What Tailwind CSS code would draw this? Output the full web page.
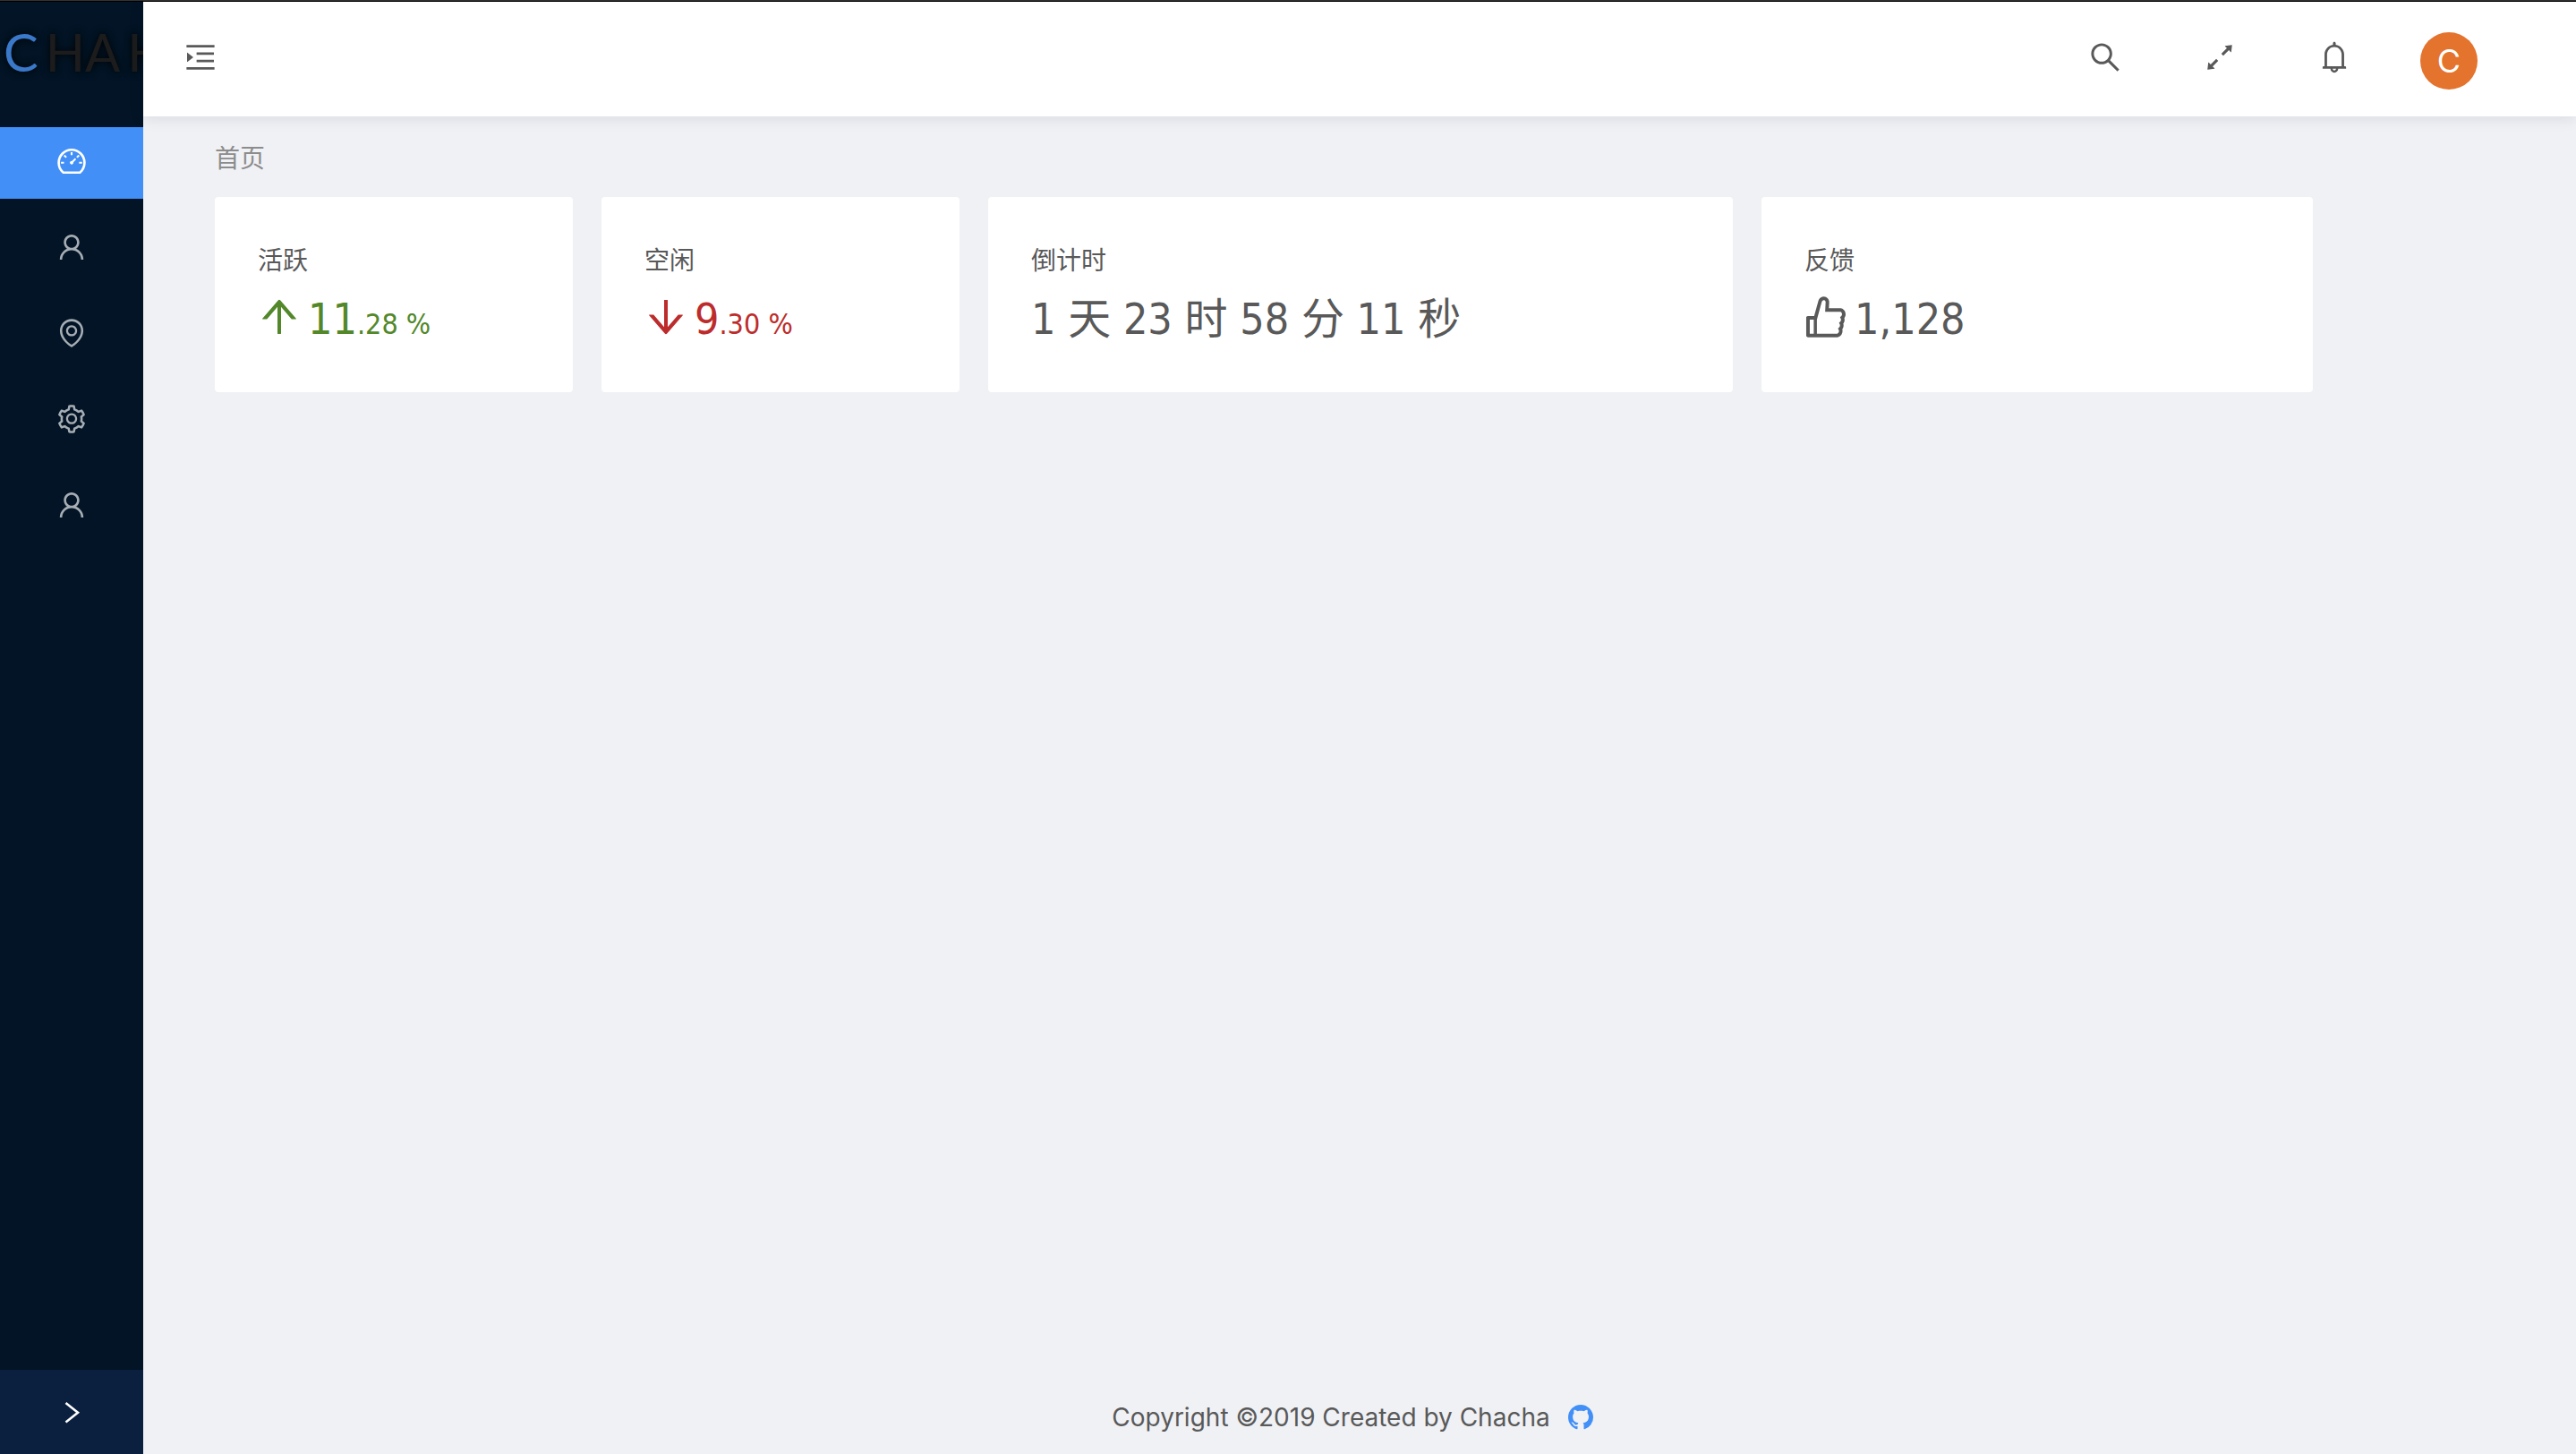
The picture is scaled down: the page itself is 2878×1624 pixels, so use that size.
<!DOCTYPE html>
<html lang="zh-CN">
<head>
<meta charset="utf-8">
<meta name="viewport" content="width=device-width, initial-scale=1">
<title>首页</title>
<script src="https://cdn.jsdelivr.net/npm/@tailwindcss/browser@4"></script>
</head>
<body class="flex min-h-screen flex-col bg-[#f0f1f5] font-['Inter','Noto_Sans_CJK_SC',sans-serif] text-[28px] text-[#595959]">
<div class="h-0.5 border-t border-[#333333] bg-black"></div>
<div class="flex flex-1">
  <aside class="flex w-40 shrink-0 flex-col bg-[#021425]">
    <div class="flex h-[140px] items-start gap-2 overflow-hidden pt-5 pl-1 font-['Lato',sans-serif] text-[58px] leading-[72px] whitespace-nowrap text-[#1c1c1c] [text-shadow:0_0_10px_#000]">
      <span class="text-[#3a78c9]">C</span><span>HA</span><span>H</span>
    </div>
    <nav class="flex flex-1 flex-col gap-4 text-[#a6adb4]">
      <a href="#" aria-label="首页" class="flex h-20 items-center justify-center bg-[#4290f7] pb-1 text-white"><svg class="size-9" viewBox="0 0 1024 1024" fill="currentColor"><path d="M924.8 385.6a446.7 446.7 0 0 0-96-142.4 446.7 446.7 0 0 0-142.4-96C631.1 123.8 572.5 112 512 112s-119.1 11.8-174.4 35.2a446.7 446.7 0 0 0-142.4 96 446.7 446.7 0 0 0-96 142.4C75.8 440.9 64 499.5 64 560c0 132.7 58.3 257.7 159.9 343.1l1.7 1.4c5.8 4.8 13.1 7.5 20.6 7.5h531.7c7.5 0 14.8-2.7 20.6-7.5l1.7-1.4C901.7 817.7 960 692.7 960 560c0-60.5-11.9-119.1-35.2-174.4zM761.4 836H262.6A371.12 371.12 0 0 1 140 560c0-99.4 38.7-192.8 109-263 70.3-70.3 163.7-109 263-109 99.4 0 192.8 38.7 263 109 70.3 70.3 109 163.7 109 263 0 105.6-44.5 205.5-122.6 276zM623.5 421.5a8.03 8.03 0 0 0-11.3 0L527.7 506c-18.7-5-39.4-.2-54.1 14.5a55.95 55.95 0 0 0 0 79.2 55.95 55.95 0 0 0 79.2 0 55.87 55.87 0 0 0 14.5-54.1l84.5-84.5c3.1-3.1 3.1-8.2 0-11.3l-28.3-28.3zM490 320h44c4.4 0 8-3.6 8-8v-80c0-4.4-3.6-8-8-8h-44c-4.4 0-8 3.6-8 8v80c0 4.4 3.6 8 8 8zm260 218v44c0 4.4 3.6 8 8 8h80c4.4 0 8-3.6 8-8v-44c0-4.4-3.6-8-8-8h-80c-4.4 0-8 3.6-8 8zm12.7-197.2l-31.1-31.1a8.03 8.03 0 0 0-11.3 0l-56.6 56.6a8.03 8.03 0 0 0 0 11.3l31.1 31.1c3.1 3.1 8.2 3.1 11.3 0l56.6-56.6c3.1-3.1 3.1-8.2 0-11.3zm-458.6-31.1a8.03 8.03 0 0 0-11.3 0l-31.1 31.1a8.03 8.03 0 0 0 0 11.3l56.6 56.6c3.1 3.1 8.2 3.1 11.3 0l31.1-31.1c3.1-3.1 3.1-8.2 0-11.3l-56.6-56.6zM262 530h-80c-4.4 0-8 3.6-8 8v44c0 4.4 3.6 8 8 8h80c4.4 0 8-3.6 8-8v-44c0-4.4-3.6-8-8-8z"/></svg></a>
      <a href="#" aria-label="用户" class="flex h-20 items-center justify-center pb-1"><svg class="size-9" viewBox="0 0 1024 1024" fill="currentColor"><path d="M858.5 763.6a374 374 0 0 0-80.6-119.5 375.63 375.63 0 0 0-119.5-80.6c-.4-.2-.8-.3-1.2-.5C719.5 518 760 444.7 760 362c0-137-111-248-248-248S264 225 264 362c0 82.7 40.5 156 102.8 201.1-.4.2-.8.3-1.2.5-44.8 18.9-85 46-119.5 80.6a375.63 375.63 0 0 0-80.6 119.5A371.7 371.7 0 0 0 136 901.8a8 8 0 0 0 8 8.2h60c4.4 0 7.9-3.5 8-7.8 2-77.2 33-149.5 87.8-204.3 56.7-56.7 132-87.9 212.2-87.9s155.5 31.2 212.2 87.9C779 752.7 810 825 812 902.2c.1 4.4 3.6 7.8 8 7.8h60a8 8 0 0 0 8-8.2c-1-47.8-10.9-94.3-29.5-138.2zM512 534c-45.9 0-89.1-17.9-121.6-50.4S340 407.9 340 362c0-45.9 17.9-89.1 50.4-121.6S466.1 190 512 190s89.1 17.9 121.6 50.4S684 316.1 684 362c0 45.9-17.9 89.1-50.4 121.6S557.9 534 512 534z"/></svg></a>
      <a href="#" aria-label="位置" class="flex h-20 items-center justify-center pb-1"><svg class="size-9" viewBox="0 0 1024 1024" fill="currentColor"><path d="M854.6 289.1a362.49 362.49 0 0 0-79.9-115.7 370.83 370.83 0 0 0-118.2-77.8C610.7 76.6 562.1 67 512 67c-50.1 0-98.7 9.6-144.5 28.5-44.3 18.3-84 44.5-118.2 77.8A363.6 363.6 0 0 0 169.4 289c-19.5 45-29.4 92.8-29.4 142 0 70.6 16.9 140.9 50.1 208.7 26.7 54.5 64 107.6 111 158.1 80.3 86.2 164.5 138.9 188.4 153a43.9 43.9 0 0 0 22.4 6.1c7.8 0 15.5-2 22.4-6.1 23.9-14.1 108.1-66.8 188.4-153 47-50.4 84.3-103.6 111-158.1C867.1 572 884 501.8 884 431.1c0-49.2-9.9-97-29.4-142zM512 880.2c-65.9-41.9-300-207.8-300-449.1 0-77.9 31.1-151.1 87.6-206.3C356.3 169.5 431.7 139 512 139s155.7 30.5 212.4 85.9C780.9 280 812 353.2 812 431.1c0 241.3-234.1 407.2-300 449.1zm0-617.2c-97.2 0-176 78.8-176 176s78.8 176 176 176 176-78.8 176-176-78.8-176-176-176zm79.2 255.2A111.6 111.6 0 0 1 512 551c-29.9 0-58-11.7-79.2-32.8A111.6 111.6 0 0 1 400 439c0-29.9 11.7-58 32.8-79.2C454 338.6 482.1 327 512 327c29.9 0 58 11.6 79.2 32.8C612.4 381 624 409.1 624 439c0 29.9-11.6 58-32.8 79.2z"/></svg></a>
      <a href="#" aria-label="设置" class="flex h-20 items-center justify-center pb-1"><svg class="size-9" viewBox="0 0 1024 1024" fill="currentColor"><path d="M924.8 625.7l-65.5-56c3.1-19 4.7-38.4 4.7-57.8s-1.6-38.8-4.7-57.8l65.5-56a32.03 32.03 0 0 0 9.3-35.2l-.9-2.6a443.74 443.74 0 0 0-79.7-137.9l-1.8-2.1a32.12 32.12 0 0 0-35.1-9.5l-81.3 28.9c-30-24.6-63.5-44-99.7-57.6l-15.7-85a32.05 32.05 0 0 0-25.8-25.7l-2.7-.5c-52.1-9.4-106.9-9.4-159 0l-2.7.5a32.05 32.05 0 0 0-25.8 25.7l-15.8 85.4a351.86 351.86 0 0 0-99 57.4l-81.9-29.1a32 32 0 0 0-35.1 9.5l-1.8 2.1a446.02 446.02 0 0 0-79.7 137.9l-.9 2.6c-4.5 12.5-.8 26.5 9.3 35.2l66.3 56.6c-3.1 18.8-4.6 38-4.6 57.1 0 19.2 1.5 38.4 4.6 57.1L99 625.5a32.03 32.03 0 0 0-9.3 35.2l.9 2.6c18.1 50.4 44.9 96.9 79.7 137.9l1.8 2.1a32.12 32.12 0 0 0 35.1 9.5l81.9-29.1c29.8 24.5 63.1 43.9 99 57.4l15.8 85.4a32.05 32.05 0 0 0 25.8 25.7l2.7.5a449.4 449.4 0 0 0 159 0l2.7-.5a32.05 32.05 0 0 0 25.8-25.7l15.7-85a350 350 0 0 0 99.7-57.6l81.3 28.9a32 32 0 0 0 35.1-9.5l1.8-2.1c34.8-41.1 61.6-87.5 79.7-137.9l.9-2.6c4.5-12.3.8-26.3-9.3-35zM788.3 465.9c2.5 15.1 3.8 30.6 3.8 46.1s-1.3 31-3.8 46.1l-6.6 40.1 74.7 63.9a370.03 370.03 0 0 1-42.6 73.6L721 702.8l-31.4 25.8c-23.9 19.6-50.5 35-79.3 45.8l-38.1 14.3-17.9 97a377.5 377.5 0 0 1-85 0l-17.9-97.2-37.8-14.5c-28.5-10.8-55-26.2-78.7-45.7l-31.4-25.9-93.4 33.2c-17-22.9-31.2-47.6-42.6-73.6l75.5-64.5-6.5-40c-2.4-14.9-3.7-30.3-3.7-45.5 0-15.3 1.2-30.6 3.7-45.5l6.5-40-75.5-64.5c11.3-26.1 25.6-50.7 42.6-73.6l93.4 33.2 31.4-25.9c23.7-19.5 50.2-34.9 78.7-45.7l37.9-14.3 17.9-97.2c28.1-3.2 56.8-3.2 85 0l17.9 97 38.1 14.3c28.7 10.8 55.4 26.2 79.3 45.8l31.4 25.8 92.8-32.9c17 22.9 31.2 47.6 42.6 73.6L781.8 426l6.5 39.9zM512 326c-97.2 0-176 78.8-176 176s78.8 176 176 176 176-78.8 176-176-78.8-176-176-176zm79.2 255.2A111.6 111.6 0 0 1 512 614c-29.9 0-58-11.7-79.2-32.8A111.6 111.6 0 0 1 400 502c0-29.9 11.7-58 32.8-79.2C454 401.6 482.1 390 512 390c29.9 0 58 11.6 79.2 32.8A111.6 111.6 0 0 1 624 502c0 29.9-11.6 58-32.8 79.2z"/></svg></a>
      <a href="#" aria-label="账户" class="flex h-20 items-center justify-center pb-1"><svg class="size-9" viewBox="0 0 1024 1024" fill="currentColor"><path d="M858.5 763.6a374 374 0 0 0-80.6-119.5 375.63 375.63 0 0 0-119.5-80.6c-.4-.2-.8-.3-1.2-.5C719.5 518 760 444.7 760 362c0-137-111-248-248-248S264 225 264 362c0 82.7 40.5 156 102.8 201.1-.4.2-.8.3-1.2.5-44.8 18.9-85 46-119.5 80.6a375.63 375.63 0 0 0-80.6 119.5A371.7 371.7 0 0 0 136 901.8a8 8 0 0 0 8 8.2h60c4.4 0 7.9-3.5 8-7.8 2-77.2 33-149.5 87.8-204.3 56.7-56.7 132-87.9 212.2-87.9s155.5 31.2 212.2 87.9C779 752.7 810 825 812 902.2c.1 4.4 3.6 7.8 8 7.8h60a8 8 0 0 0 8-8.2c-1-47.8-10.9-94.3-29.5-138.2zM512 534c-45.9 0-89.1-17.9-121.6-50.4S340 407.9 340 362c0-45.9 17.9-89.1 50.4-121.6S466.1 190 512 190s89.1 17.9 121.6 50.4S684 316.1 684 362c0 45.9-17.9 89.1-50.4 121.6S557.9 534 512 534z"/></svg></a>
    </nav>
    <button type="button" aria-label="展开菜单" class="flex h-[94px] items-center justify-center bg-[#0a203e] text-white"><svg class="size-7" viewBox="0 0 28 28" fill="none" stroke="currentColor" stroke-width="2.6"><path d="M7.500 4L21 14.800L7.500 25.600"/></svg></button>
  </aside>
  <div class="flex min-w-0 flex-1 flex-col">
    <header class="flex h-32 items-center justify-between bg-white pr-[78px] pl-11 shadow-[0_2px_16px_rgba(0,21,41,0.1)]">
      <button type="button" aria-label="切换菜单" class="pb-1"><svg class="size-10" viewBox="0 0 1024 1024" fill="currentColor"><path d="M408 442h480c4.4 0 8-3.6 8-8v-56c0-4.400-3.600-8-8-8H408c-4.400 0-8 3.600-8 8v56c0 4.400 3.600 8 8 8zm-8 204c0 4.400 3.600 8 8 8h480c4.400 0 8-3.600 8-8v-56c0-4.400-3.600-8-8-8H408c-4.400 0-8 3.600-8 8v56zm504-486H120c-4.400 0-8 3.600-8 8v56c0 4.400 3.600 8 8 8h784c4.400 0 8-3.600 8-8v-56c0-4.400-3.600-8-8-8zm0 632H120c-4.400 0-8 3.600-8 8v56c0 4.400 3.600 8 8 8h784c4.400 0 8-3.600 8-8v-56c0-4.400-3.600-8-8-8zM142.400 642.100L298.700 519a8.840 8.840 0 0 0 0-13.900L142.400 381.900c-5.800-4.600-14.400-.5-14.400 6.900v246.300a8.900 8.900 0 0 0 14.400 7z"/></svg></button>
      <div class="flex items-center">
        <button type="button" aria-label="搜索" class="flex w-32 justify-center pb-1"><svg class="size-10" viewBox="0 0 1024 1024" fill="currentColor"><path d="M909.6 854.5L649.9 594.8C690.2 542.7 712 479 712 412c0-80.2-31.3-155.4-87.9-212.1-56.6-56.7-132-87.9-212.1-87.9s-155.5 31.3-212.1 87.9C143.2 256.5 112 331.8 112 412c0 80.1 31.3 155.5 87.9 212.1C256.5 680.8 331.8 712 412 712c67 0 130.6-21.8 182.7-62l259.7 259.6a8.2 8.2 0 0 0 11.6 0l43.6-43.5a8.2 8.2 0 0 0 0-11.6zM570.4 570.4C528 612.7 471.8 636 412 636s-116-23.3-158.4-65.6C211.3 528 188 471.8 188 412s23.3-116.1 65.6-158.4C296 211.3 352.2 188 412 188s116.1 23.2 158.4 65.6S636 352.2 636 412s-23.3 116.1-65.6 158.4z"/></svg></button>
        <button type="button" aria-label="全屏" class="flex w-32 justify-center pb-1"><svg class="size-10" viewBox="0 0 1024 1024" fill="currentColor"><path d="M855 160.1l-189.2 23.5c-6.6.8-9.3 8.8-4.7 13.5l54.7 54.7-153.5 153.5a8.03 8.03 0 0 0 0 11.3l45.1 45.1c3.1 3.1 8.2 3.1 11.3 0l153.6-153.6 54.7 54.7a7.94 7.94 0 0 0 13.5-4.7L863.9 169a7.9 7.9 0 0 0-8.9-8.9zM416.6 562.3a8.03 8.03 0 0 0-11.3 0L251.8 715.9l-54.7-54.7a7.94 7.94 0 0 0-13.5 4.7L160.1 855c-.6 5.2 3.7 9.5 8.9 8.9l189.2-23.5c6.6-.8 9.3-8.8 4.7-13.5l-54.7-54.7 153.6-153.6c3.1-3.1 3.1-8.2 0-11.3l-45.2-45z"/></svg></button>
        <button type="button" aria-label="通知" class="flex w-32 justify-center pb-1"><svg class="size-10" viewBox="0 0 1024 1024" fill="currentColor"><path d="M816 768h-24V428c0-141.1-104.3-257.7-240-277.1V112c0-22.1-17.9-40-40-40s-40 17.9-40 40v38.900c-135.700 19.400-240 136-240 277.100v340h-24c-17.700 0-32 14.300-32 32v32c0 4.400 3.600 8 8 8h216c0 61.800 50.200 112 112 112s112-50.200 112-112h216c4.400 0 8-3.600 8-8v-32c0-17.700-14.300-32-32-32zM512 888c-26.500 0-48-21.500-48-48h96c0 26.500-21.500 48-48 48zM304 768V428c0-55.600 21.600-107.800 60.900-147.100S456.400 220 512 220c55.600 0 107.800 21.600 147.100 60.900S720 372.400 720 428v340H304z"/></svg></button>
        <button type="button" class="flex w-32 justify-center pt-1"><span class="flex size-16 items-center justify-center rounded-full bg-[#e4732e] text-4xl text-white">C</span></button>
      </div>
    </header>
    <main class="flex-1 pr-[78px] pl-20">
      <nav aria-label="面包屑" class="pt-6 pb-5 leading-[46px] text-[#8c8c8c]">首页</nav>
      <div class="grid grid-cols-24 gap-8">
        <section class="col-span-4 rounded bg-white p-12">
          <h2 class="mb-1 leading-[46px]">活跃</h2>
          <div class="flex items-center gap-2 font-['DejaVu_Sans_Condensed','Noto_Sans_CJK_SC',sans-serif] text-[48px] leading-[68px] whitespace-nowrap text-[#52882a]">
            <svg class="size-12" viewBox="57 57 910 910" fill="currentColor"><path d="M868 545.5L536.1 163a31.96 31.96 0 0 0-48.3 0L156 545.5a7.97 7.97 0 0 0 6 13.2h81c4.6 0 9-2 12.1-5.5L474 300.9V864c0 4.400 3.600 8 8 8h60c4.400 0 8-3.600 8-8V300.900l218.900 252.300c3 3.500 7.400 5.500 12.100 5.500h81c6.800 0 10.500-8 6-13.200z"/></svg>
            <p class="pt-1">11<span class="text-[32px] leading-none">.28 %</span></p>
          </div>
        </section>
        <section class="col-span-4 rounded bg-white p-12">
          <h2 class="mb-1 leading-[46px]">空闲</h2>
          <div class="flex items-center gap-2 font-['DejaVu_Sans_Condensed','Noto_Sans_CJK_SC',sans-serif] text-[48px] leading-[68px] whitespace-nowrap text-[#bd2c2c]">
            <svg class="size-12 rotate-180" viewBox="57 57 910 910" fill="currentColor"><path d="M868 545.5L536.1 163a31.96 31.96 0 0 0-48.3 0L156 545.5a7.97 7.97 0 0 0 6 13.2h81c4.6 0 9-2 12.1-5.5L474 300.9V864c0 4.400 3.600 8 8 8h60c4.400 0 8-3.600 8-8V300.900l218.900 252.300c3 3.500 7.400 5.500 12.100 5.500h81c6.800 0 10.500-8 6-13.200z"/></svg>
            <p class="pt-1">9<span class="text-[32px] leading-none">.30 %</span></p>
          </div>
        </section>
        <section class="col-span-8 rounded bg-white p-12">
          <h2 class="mb-1 leading-[46px]">倒计时</h2>
          <p class="pt-1 font-['DejaVu_Sans_Condensed','Noto_Sans_CJK_SC',sans-serif] text-[48px] leading-[68px] whitespace-nowrap">1 天 23 时 58 分 11 秒</p>
        </section>
        <section class="col-span-6 rounded bg-white p-12">
          <h2 class="mb-1 leading-[46px]">反馈</h2>
          <div class="flex items-center gap-2 font-['DejaVu_Sans_Condensed','Noto_Sans_CJK_SC',sans-serif] text-[48px] leading-[68px] whitespace-nowrap">
            <svg class="size-12" viewBox="76 76 873 873" fill="currentColor"><path d="M885.9 533.7c16.8-22.2 26.1-49.4 26.1-77.7 0-44.9-25.1-87.4-65.5-111.1a67.67 67.67 0 0 0-34.3-9.3H572.4l6-122.9c1.4-29.7-9.1-57.9-29.5-79.4A106.62 106.62 0 0 0 471 99.900c-52 0-98 35-111.800 85.100l-85.900 311H144c-17.700 0-32 14.300-32 32v364c0 17.700 14.300 32 32 32h601.300c9.200 0 18.200-1.800 26.500-5.400 47.600-20.300 78.300-66.800 78.300-118.400 0-12.600-1.800-25-5.400-37 16.800-22.200 26.100-49.400 26.100-77.700 0-12.600-1.800-25-5.400-37 16.800-22.200 26.100-49.400 26.100-77.700-.2-12.600-2-25.100-5.600-37.100zM184 852V568h81v284h-81zm636.400-353l-21.900 19 13.900 25.400a56.200 56.200 0 0 1 6.900 27.300c0 16.500-7.200 32.200-19.600 43l-21.900 19 13.900 25.400a56.200 56.200 0 0 1 6.900 27.300c0 16.500-7.200 32.200-19.600 43l-21.900 19 13.900 25.400a56.200 56.200 0 0 1 6.900 27.300c0 22.400-13.200 42.600-33.600 51.800H329V564.800l99.500-360.500a44.100 44.100 0 0 1 42.200-32.300c7.600 0 15.100 2.200 21.100 6.700 9.900 7.400 15.200 18.600 14.600 30.500l-9.600 198.400h314.400C829 418.500 840 436.900 840 456c0 16.500-7.200 32.100-19.600 43z"/></svg>
            <p class="pt-1">1,128</p>
          </div>
        </section>
      </div>
    </main>
    <footer class="flex items-center justify-center gap-5 pt-4 pr-4 pb-5 leading-[42px]">
      <p>Copyright ©2019 Created by Chacha</p>
      <a href="#" aria-label="GitHub" class="text-[#4290f7]"><svg class="size-7" viewBox="0 0 16 16" fill="currentColor"><path d="M8 0C3.580 0 0 3.580 0 8c0 3.540 2.290 6.530 5.470 7.590.4.070.55-.170.55-.380 0-.190-.010-.820-.010-1.490-2.010.370-2.530-.490-2.690-.940-.090-.230-.480-.940-.820-1.130-.280-.150-.680-.520-.010-.530.630-.010 1.080.580 1.230.820.720 1.210 1.870.870 2.330.660.070-.520.280-.870.510-1.070-1.780-.200-3.640-.890-3.640-3.950 0-.870.310-1.590.820-2.150-.080-.200-.360-1.020.080-2.120 0 0 .670-.210 2.200.820.640-.180 1.320-.270 2-.270.680 0 1.360.090 2 .270 1.530-1.040 2.200-.820 2.200-.820.440 1.100.160 1.920.080 2.120.510.560.820 1.270.820 2.150 0 3.070-1.870 3.750-3.650 3.950.290.250.540.730.540 1.480 0 1.070-.010 1.930-.010 2.200 0 .210.150.460.550.380A8.013 8.013 0 0 0 16 8c0-4.420-3.580-8-8-8z"/></svg></a>
    </footer>
  </div>
</div>
</body>
</html>
